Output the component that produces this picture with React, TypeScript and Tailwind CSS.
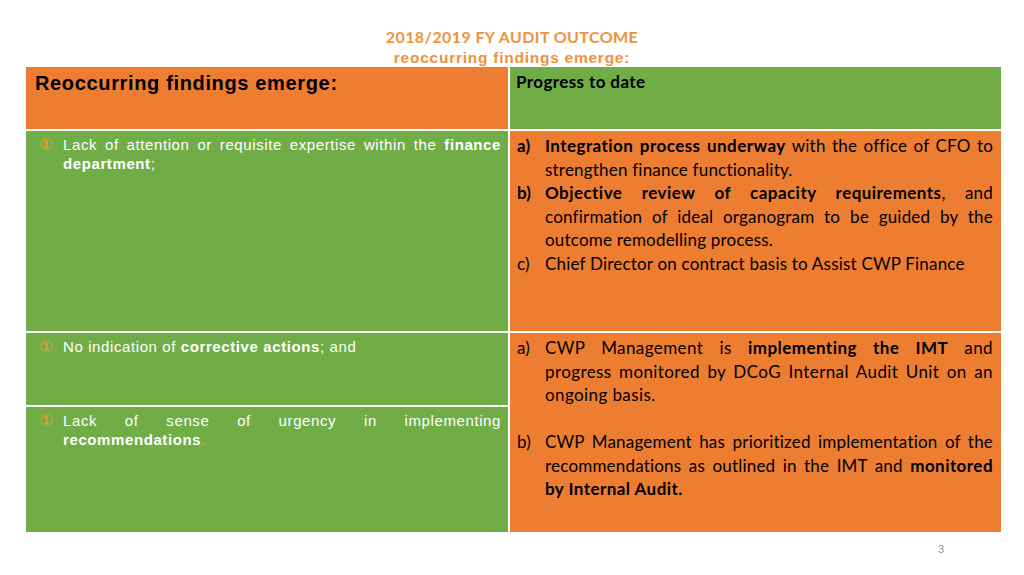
import React from 'react';

const orange = 'bg-[#ED7D31]';
const green = 'bg-[#70AD47]';

const Finding = ({ children }: { children: React.ReactNode }) => (
  <div className="flex pl-[13px] pr-[7px] pt-[4px] font-['Liberation_Sans',Arial,sans-serif] text-[15px] leading-[19px] tracking-[0.6px] text-white">
    <span className="w-[24px] shrink-0 text-[16px] leading-[19px] tracking-normal text-[#F0A030]">①</span>
    <p className="flex-1 text-justify">{children}</p>
  </div>
);

const B = ({ children }: { children: React.ReactNode }) => (
  <b className="tracking-[0.45px]">{children}</b>
);

const Item = ({ label, bold, wide, children }: { label: string; bold?: boolean; wide?: boolean; children: React.ReactNode }) => (
  <div className="flex">
    <span className={`w-[28px] shrink-0 ${bold ? 'font-bold' : ''}`}>{label}</span>
    <p className={`flex-1 text-justify ${wide ? 'tracking-[0.4px]' : ''}`}>{children}</p>
  </div>
);

export default function App() {
  return (
    <div className="w-[1024px] h-[575px] bg-white overflow-hidden relative">
      {/* Title */}
      <div className="h-[67px] flex flex-col items-center pt-[27px]">
        <h1 className="font-['Lato',sans-serif] font-bold text-[16px] leading-[20px] tracking-[0.4px] text-[#F0923A]">
          2018/2019 FY AUDIT OUTCOME
        </h1>
        <h2 className="font-['Liberation_Sans',Arial,sans-serif] font-bold text-[15.5px] leading-[20px] tracking-[0.75px] text-[#F0923A] mt-[1px]">
          reoccurring findings emerge:
        </h2>
      </div>

      {/* Table */}
      <div className="relative z-10 ml-[26px] w-[975px] grid grid-cols-[482px_491px] grid-rows-[62px_200px_72px_125px] gap-[2px] bg-white">
        <div className={`${orange} px-[9px] pt-[4px] font-['Liberation_Sans',Arial,sans-serif] font-bold text-[20px] leading-[24px] tracking-[0.65px] text-black`}>
          Reoccurring findings emerge:
        </div>
        <div className={`${green} px-[6px] pt-[4px] font-['Lato',sans-serif] font-bold text-[17px] leading-[22px] tracking-[0.4px] text-black`}>
          Progress to date
        </div>

        <div className={green}>
          <Finding>
            Lack of attention or requisite expertise within the <b>finance department</b>;
          </Finding>
        </div>
        <div className={`${orange} pl-[7px] pr-[8px] pt-[3px] font-['Lato',sans-serif] text-[17px] leading-[23.5px] tracking-[0.2px] text-black`}>
          <Item label="a)" bold>
            <B>Integration process underway</B> with the office of CFO to strengthen finance functionality.
          </Item>
          <Item label="b)" bold>
            <B>Objective review of capacity requirements</B>, and confirmation of ideal organogram to be guided by the outcome remodelling process.
          </Item>
          <Item label="c)">Chief Director on contract basis to Assist CWP Finance</Item>
        </div>

        <div className={green}>
          <Finding>
            No indication of <b>corrective actions</b>; and
          </Finding>
        </div>
        <div className={`${orange} row-span-2 pl-[7px] pr-[8px] pt-[3px] font-['Lato',sans-serif] text-[17px] leading-[23.5px] tracking-[0.2px] text-black`}>
          <Item label="a)" wide>
            CWP Management is <B>implementing the IMT</B> and progress monitored by DCoG Internal Audit Unit on an ongoing basis.
          </Item>
          <div className="h-[23.5px]" />
          <Item label="b)">
            CWP Management has prioritized implementation of the recommendations as outlined in the IMT and <B>monitored by Internal Audit.</B>
          </Item>
        </div>

        <div className={green}>
          <Finding>
            Lack of sense of urgency in implementing <b>recommendations</b><span className="text-[#F0A030]">.</span>
          </Finding>
        </div>
      </div>

      <div className="absolute left-[938px] top-[541px] font-['Liberation_Sans',Arial,sans-serif] text-[11px] text-[#8c8c8c]">
        3
      </div>
    </div>
  );
}
